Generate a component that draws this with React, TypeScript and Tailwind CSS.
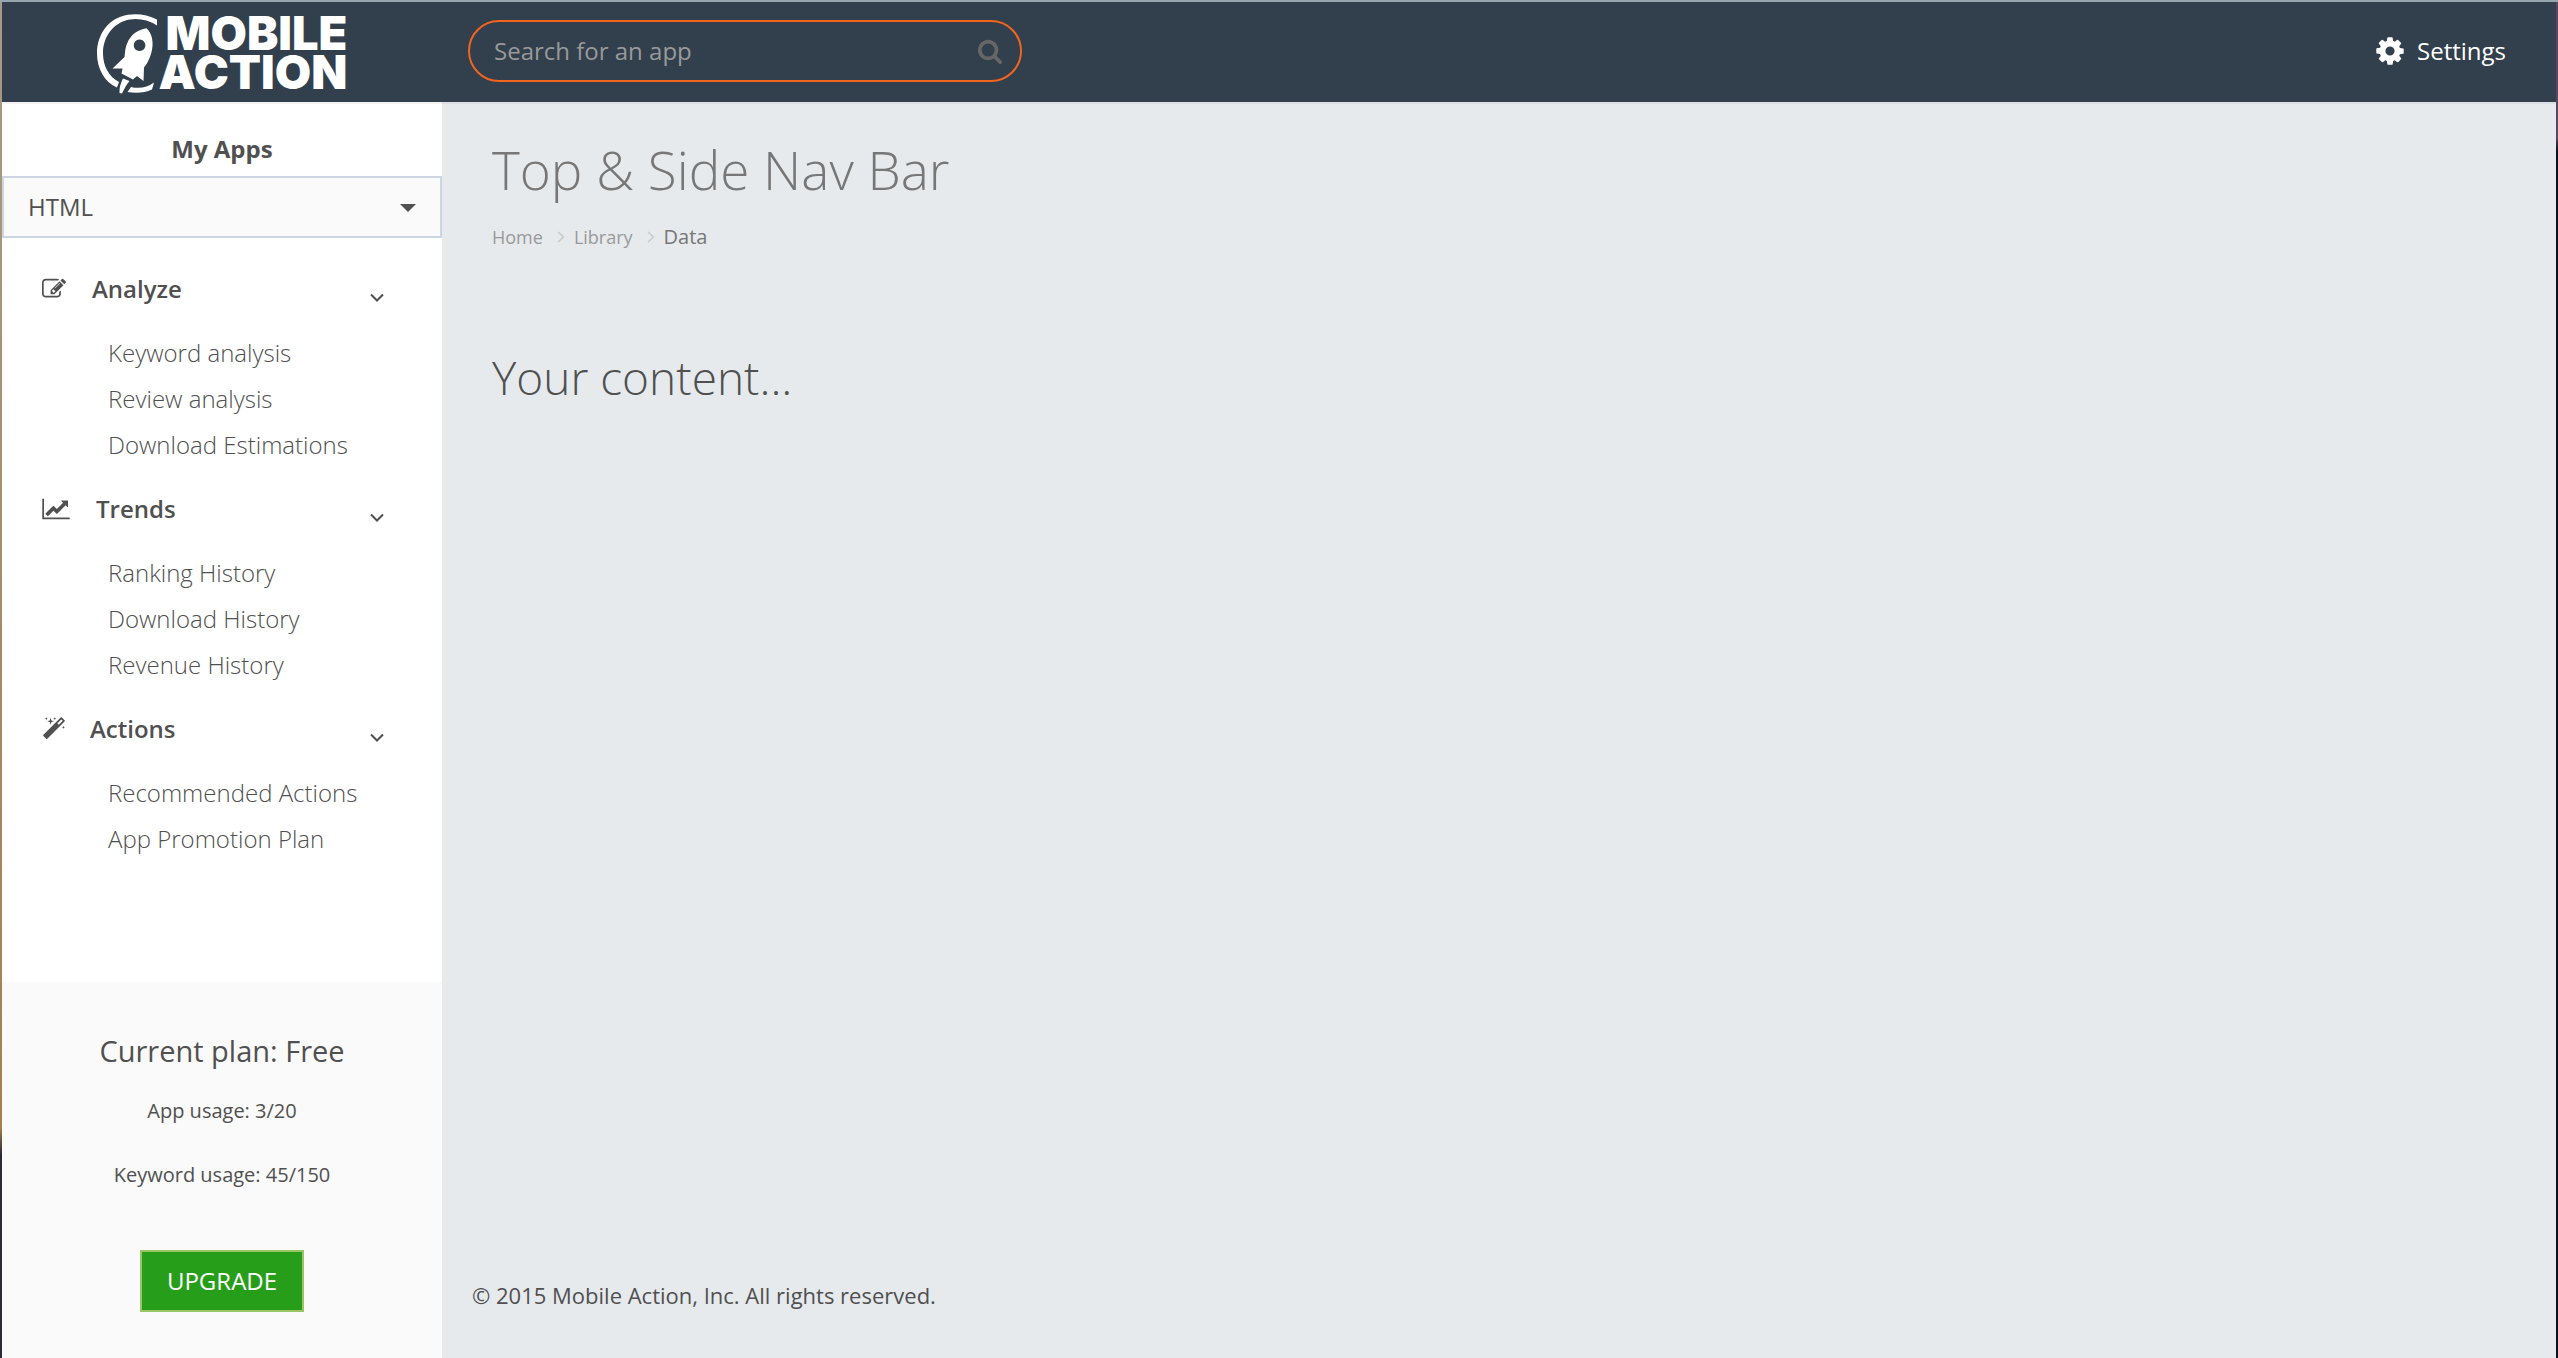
import React from "react";

type IconProps = { d: string; box?: string; className: string };

function Icon({ d, box = "0 0 1792 1792", className }: IconProps) {
  return (
    <svg viewBox={box} fill="currentColor" aria-hidden="true" className={className}>
      <path d={d} />
    </svg>
  );
}

const COG =
  "M1152 896q0-106-75-181t-181-75-181 75-75 181 75 181 181 75 181-75 75-181zm512-109v222q0 12-8 23t-20 13l-185 28q-19 54-39 91 35 50 107 138 10 12 10 25t-9 23q-27 37-99 108t-94 71q-12 0-26-9l-138-108q-44 23-91 38-16 136-29 186-7 28-36 28h-222q-14 0-24.500-8.500t-11.500-21.500l-28-184q-49-16-90-37l-141 107q-10 9-25 9-14 0-25-11-126-114-165-168-7-10-7-23 0-12 8-23 15-21 51-66.500t54-70.500q-27-50-41-99l-183-27q-13-2-21-12.500t-8-23.500v-222q0-12 8-23t19-13l186-28q14-46 39-92-40-57-107-138-10-12-10-24 0-10 9-23 26-36 98.500-107.500t94.500-71.500q13 0 26 10l138 107q44-23 91-38 16-136 29-186 7-28 36-28h222q14 0 24.500 8.500t11.500 21.500l28 184q49 16 90 37l142-107q9-9 24-9 13 0 25 10 129 119 165 170 7 8 7 22 0 12-8 23-15 21-51 66.500t-54 70.500q26 50 41 98l183 28q13 2 21 12.500t8 23.500z";
const SEARCH =
  "M1216 832q0-185-131.500-316.500t-316.500-131.500-316.500 131.500-131.500 316.500 131.500 316.500 316.500 131.500 316.500-131.500 131.500-316.500zm512 832q0 52-38 90t-90 38q-54 0-90-38l-343-342q-179 124-399 124-143 0-273.500-55.500t-225-150-150-225-55.500-273.500 55.500-273.500 150-225 225-150 273.500-55.500 273.500 55.500 225 150 150 225 55.500 273.500q0 220-124 399l343 343q37 37 37 90z";
const EDIT =
  "M888 1184l116-116-152-152-116 116v56h96v96h56zm440-720q-16-16-33 1l-350 350q-17 17-1 33t33-1l350-350q17-17 1-33zm80 594v190q0 119-84.500 203.500t-203.500 84.500h-832q-119 0-203.500-84.500t-84.500-203.500v-832q0-119 84.500-203.500t203.500-84.500h832q63 0 117 25 15 7 18 23 3 17-9 29l-49 49q-14 14-32 8-23-6-45-6h-832q-66 0-113 47t-47 113v832q0 66 47 113t113 47h832q66 0 113-47t47-113v-126q0-13 9-22l64-64q15-15 35-7t20 29zm-96-738l288 288-672 672h-288v-288zm444 132l-92 92-288-288 92-92q28-28 68-28t68 28l152 152q28 28 28 68t-28 68z";
const CHART =
  "M2048 1536v128h-2048v-1536h128v1408h1920zm-128-1248v435q0 21-19.500 29.500t-35.500-7.500l-121-121-633 633q-10 10-23 10t-23-10l-233-233-416 416-192-192 585-585q10-10 23-10t23 10l233 233 464-464-121-121q-16-16-7.500-35.500t29.500-19.500h435q14 0 23 9t9 23z";
const MAGIC =
  "M1254 581l293-293-107-107-293 293zm447-293q0 27-18 45l-1286 1286q-18 18-45 18t-45-18l-198-198q-18-18-18-45t18-45l1286-1286q18-18 45-18t45 18l198 198q18 18 18 45zm-1351-190l98 30-98 30-30 98-30-98-98-30 98-30 30-98zm350 162l196 60-196 60-60 196-60-196-196-60 196-60 60-196zm930 478l98 30-98 30-30 98-30-98-98-30 98-30 30-98zm-640-640l98 30-98 30-30 98-30-98-98-30 98-30 30-98z";

const sections = [
  {
    title: "Analyze",
    icon: <Icon d={EDIT} className="h-6 w-6" />,
    gap: "gap-[26px]",
    items: ["Keyword analysis", "Review analysis", "Download Estimations"],
  },
  {
    title: "Trends",
    icon: <Icon d={CHART} box="0 0 2048 1792" className="h-6 w-7" />,
    gap: "gap-[26px]",
    items: ["Ranking History", "Download History", "Revenue History"],
  },
  {
    title: "Actions",
    icon: <Icon d={MAGIC} className="h-6 w-6" />,
    gap: "gap-6",
    items: ["Recommended Actions", "App Promotion Plan"],
  },
];

function Logo() {
  return (
    <a href="#" className="flex w-[440px] shrink-0 items-center justify-center gap-0.5 pt-1.5">
      <svg viewBox="0 0 60 80" className="h-20 w-[60px]" fill="#fff" aria-hidden="true">
        <path d="M60 5.500 Q46 -1.500 31 .8 C12 3.500 0 20 0 39.500 C0 55 8 68.500 20 73.500 L22 68 C12 63 6 52 6 39.500 C6 22 17 8 33 5.500 Q47 3.500 60 11.500 Z" />
        <path d="M34 73 Q47 76 57 68.500 L55 75.500 Q44 80.500 30.500 78 Z" />
        <path d="M26 64.500 L32.500 67 Q29 71 25 79.500 L22.500 79 Q22 72 26 64.500 Z" />
        <path
          fillRule="evenodd"
          d="M49.500 14.300 C55 19 57.500 29 54 40 Q51 49 47 53.500 L46.500 67 L40 62 L36 65.500 L24.500 59.500 L25.500 54.500 L15.500 54.500 L27.500 43 Q28 29 35 21.500 Q41 15.500 49.500 14.300 Z M42.500 25.500 a5.800 5.800 0 1 0 .1 0 Z"
        />
      </svg>
      <span className="flex flex-col items-end pb-1 font-[Inter,sans-serif] text-[47px] leading-[39px] font-black">
        <span>MOBILE</span>
        <span>ACTION</span>
      </span>
    </a>
  );
}

function Crumb({ label }: { label: string }) {
  return (
    <li className="flex items-center">
      <a href="#" className="text-[18px] text-[#999]">
        {label}
      </a>
      <svg viewBox="0 0 8 12" className="mr-[9px] ml-[14px] h-3 w-2" fill="none" stroke="#c8cbce" strokeWidth="1.500" aria-hidden="true">
        <path d="M1 1l5.500 5L1 11" />
      </svg>
    </li>
  );
}

export default function App() {
  return (
    <div className="flex min-h-screen border-t-2 border-[#97a5b0] font-['Open_Sans',sans-serif] text-[24px] leading-[34px] text-[#505050]">
      <div className="w-[2px] shrink-0 bg-linear-to-b from-[#a89a86] via-[#a67f4e] via-83% to-[#2b2b33] to-85%" />
      <div className="flex min-w-0 grow flex-col">
        <header className="flex h-[100px] items-center bg-[#323f4c] pb-0.5 text-white">
          <Logo />
          <form className="ml-[26px] flex h-[62px] w-[554px] items-center rounded-full border-2 border-[#f1651f] pr-[17px] pl-6">
            <input
              type="search"
              aria-label="Search for an app"
              placeholder="Search for an app"
              className="min-w-0 grow bg-transparent outline-none placeholder:text-[#999]"
            />
            <button type="submit" aria-label="Search" className="text-[#666]">
              <Icon d={SEARCH} className="h-[26px] w-[26px]" />
            </button>
          </form>
          <a href="#" className="mr-[50px] ml-auto flex items-center gap-[11px]">
            <Icon d={COG} className="h-8 w-8" />
            Settings
          </a>
        </header>

        <div className="flex grow">
          <aside className="flex w-[440px] shrink-0 flex-col border-t-2 border-[#f2f2f2] bg-white">
            <label htmlFor="app" className="pt-[28px] pb-[10px] text-center font-bold">
              My Apps
            </label>
            <div className="relative">
              <select
                id="app"
                className="block h-[62px] w-full appearance-none border-2 border-[#ccd6e3] bg-[#fafafa] px-6 outline-none"
              >
                <option>HTML</option>
              </select>
              <svg viewBox="0 0 16 8" className="pointer-events-none absolute top-7 right-[26px] h-2 w-4" fill="currentColor" aria-hidden="true">
                <path d="M0 0h16l-8 8z" />
              </svg>
            </div>

            <nav className="flex flex-col pt-[34px]">
              {sections.map((s) => (
                <section key={s.title} className="pb-[30px]">
                  <button type="button" className={`flex w-full items-center pr-[58px] pl-10 font-semibold ${s.gap}`}>
                    {s.icon}
                    {s.title}
                    <svg viewBox="0 0 14 10" className="mt-[18px] ml-auto h-2.5 w-3.5" fill="none" stroke="currentColor" strokeWidth="2" aria-hidden="true">
                      <path d="M1 1.500l6 6 6-6" />
                    </svg>
                  </button>
                  <ul className="flex flex-col gap-3 pt-[30px] pl-[106px] font-light">
                    {s.items.map((item) => (
                      <li key={item}>
                        <a href="#">{item}</a>
                      </li>
                    ))}
                  </ul>
                </section>
              ))}
            </nav>

            <div className="mt-auto flex h-[376px] flex-col items-center bg-[#fafafa] pt-[52px]">
              <h2 className="text-[29px]">Current plan: Free</h2>
              <p className="mt-[26px] text-[20px]">App usage: 3/20</p>
              <p className="mt-[30px] text-[20px]">Keyword usage: 45/150</p>
              <button type="button" className="mt-[58px] h-[62px] w-[164px] border-2 border-[#9ac566] bg-[#269e1a] text-white">
                UPGRADE
              </button>
            </div>
          </aside>

          <main className="flex grow flex-col border-t-2 border-[#dcdfe3] bg-[#e6eaed]">
            <div className="grow px-[50px] pt-[33px]">
              <h1 className="text-[53px] leading-[66px] font-light text-[#777]">Top &amp; Side Nav Bar</h1>
              <nav aria-label="Breadcrumb">
                <ol className="mt-[17px] flex items-center">
                  <Crumb label="Home" />
                  <Crumb label="Library" />
                  <li aria-current="page" className="text-[20px] text-[#777]">
                    Data
                  </li>
                </ol>
              </nav>
              <h2 className="mt-[90px] text-[46px] leading-[66px] font-light">Your content...</h2>
            </div>
            <footer className="px-[30px] pb-[46px] text-[22px]">© 2015 Mobile Action, Inc. All rights reserved.</footer>
          </main>
        </div>
      </div>
      <div className="w-[2px] shrink-0 bg-linear-to-b from-[#5c4560] from-10% to-[#0c1220] to-11%" />
    </div>
  );
}
